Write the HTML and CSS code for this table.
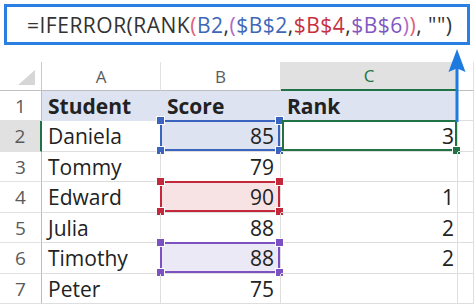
FILE: index.html
```html
<!DOCTYPE html>
<html>
<head>
<meta charset="utf-8">
<link rel="stylesheet" href="styles.css">
</head>
<body>
<div class="page">
  <div class="formula-bar">
    <span class="f-text">=IFERROR(RANK<span class="c-pink">(</span><span class="c-blue">B2</span>,<span class="c-mauve">(</span><span class="c-blue">$B$2</span>,<span class="c-red">$B$4</span>,<span class="c-purple">$B$6</span><span class="c-mauve">)</span><span class="c-pink">)</span>, "")</span>
  </div>
  <div class="sheet">
    <div class="cell corner"><span class="tri"></span></div>
    <div class="cell hdr">A</div>
    <div class="cell hdr">B</div>
    <div class="cell hdr hdr-sel">C</div>
    <div class="cell hdr"></div>

    <div class="cell rh">1</div>
    <div class="cell head">Student</div>
    <div class="cell head">Score</div>
    <div class="cell head last">Rank</div>
    <div class="cell"></div>

    <div class="cell rh rh-sel">2</div>
    <div class="cell">Daniela</div>
    <div class="cell num fill-blue"><span class="sel sel-blue"><i class="h tl"></i><i class="h bl"></i><i class="h tr"></i><i class="h br"></i></span>85</div>
    <div class="cell num numc"><span class="sel sel-green"><i class="h br"></i></span>3</div>
    <div class="cell"></div>

    <div class="cell rh">3</div>
    <div class="cell">Tommy</div>
    <div class="cell num">79</div>
    <div class="cell num numc"></div>
    <div class="cell"></div>

    <div class="cell rh">4</div>
    <div class="cell">Edward</div>
    <div class="cell num fill-red"><span class="sel sel-red"><i class="h tl"></i><i class="h bl"></i><i class="h tr"></i><i class="h br"></i></span>90</div>
    <div class="cell num numc">1</div>
    <div class="cell"></div>

    <div class="cell rh">5</div>
    <div class="cell">Julia</div>
    <div class="cell num">88</div>
    <div class="cell num numc">2</div>
    <div class="cell"></div>

    <div class="cell rh">6</div>
    <div class="cell">Timothy</div>
    <div class="cell num fill-purple"><span class="sel sel-purple"><i class="h tl"></i><i class="h bl"></i><i class="h tr"></i><i class="h br"></i></span>88</div>
    <div class="cell num numc">2</div>
    <div class="cell"></div>

    <div class="cell rh">7</div>
    <div class="cell">Peter</div>
    <div class="cell num">75</div>
    <div class="cell num numc"></div>
    <div class="cell"></div>
  </div>
  <svg class="arrow" width="20" height="76" viewBox="0 0 20 76">
    <path d="M10 1 L18.5 24 L11.5 21 L11.5 74 L8.5 74 L8.5 21 L1.5 24 Z" fill="#1f7ae0"/>
  </svg>
</div>
</body>
</html>
```

FILE: styles.css
```css
* { box-sizing: border-box; }
html, body { margin: 0; padding: 0; background: #fff; }
.page {
  position: relative;
  width: 474px;
  height: 304px;
  overflow: hidden;
  font-family: "Open Sans", "Noto Sans", sans-serif;
  color: #222;
}
.formula-bar {
  margin: 4px 4px 0 4px;
  height: 41px;
  border: 3px solid #2a7fe2;
  display: flex;
  align-items: center;
  padding-left: 20px;
}
.f-text {
  font-size: 21px;
  color: #333;
  white-space: pre;
  letter-spacing: 0.5px;
}
.c-blue { color: #3f67b8; }
.c-red { color: #c8303f; }
.c-purple { color: #8058c0; }
.c-pink { color: #e0607a; }
.c-mauve { color: #b06ac8; }

.sheet {
  margin-top: 17px;
  display: grid;
  grid-template-columns: 42px 119px 120px 177px 16px;
  grid-template-rows: 29px 30px 31px 30px 31px 30px 31px 30px;
}
.cell {
  position: relative;
  border-right: 1px solid #dedede;
  border-bottom: 1px solid #dedede;
  font-size: 21px;
  display: flex;
  align-items: center;
  padding-left: 6px;
  white-space: nowrap;
}
.corner { border-right: 1px solid #c8c8c8; border-bottom: 1px solid #c0c0c0; }
.tri {
  position: absolute;
  left: 18px;
  top: 8px;
  width: 0; height: 0;
  border-left: 17px solid transparent;
  border-bottom: 15px solid #d6d6d6;
}
.hdr {
  justify-content: center;
  padding-left: 0;
  font-size: 17px;
  color: #5c5c5c;
  border-bottom: 1px solid #bdbdbd;
  border-right: 1px solid #e2e2e2;
}
.hdr-sel {
  background: #e1e1e1;
  border-bottom: 2px solid #217346;
  color: #217346;
}
.rh {
  justify-content: center;
  padding-left: 0;
  font-size: 19px;
  color: #5a5a5a;
  border-right: 1px solid #bdbdbd;
  border-bottom: 1px solid #e2e2e2;
}
.rh-sel {
  background: #e1e1e1;
  border-right: 2px solid #217346;
}
.head {
  background: #dde3f1;
  font-weight: 700;
  border-right-color: #dde3f1;
  border-bottom-color: #dde3f1;
}
.head.last { border-right-color: #d6d6d6; }
.num { justify-content: flex-end; padding-right: 6px; padding-left: 0; }
.numc { padding-right: 3px; }
.fill-blue { background: #dde3f1; }
.fill-red { background: #f7e2e4; }
.fill-purple { background: #ece9f6; }

.sel {
  position: absolute;
  top: -1px;
  left: -1px;
  right: 0;
  bottom: 0;
  border: 2px solid;
  pointer-events: none;
}
.sel-blue { border-color: #3a64c0; }
.sel-red { border-color: #c4283a; }
.sel-purple { border-color: #7c52c2; }
.sel-green { border-color: #217346; left: 1px; right: 0; }
.h {
  position: absolute;
  width: 7px;
  height: 7px;
  box-shadow: 0 0 0 1px #fff;
}
.sel-blue .h { background: #3a64c0; }
.sel-red .h { background: #c4283a; }
.sel-purple .h { background: #7c52c2; }
.sel-green .h { background: #217346; }
.h.tl { left: -5px; top: -5px; }
.h.bl { left: -5px; bottom: -5px; }
.h.tr { right: -5px; top: -5px; }
.h.br { right: -5px; bottom: -5px; }

.arrow {
  position: absolute;
  left: 447px;
  top: 48px;
}
```
